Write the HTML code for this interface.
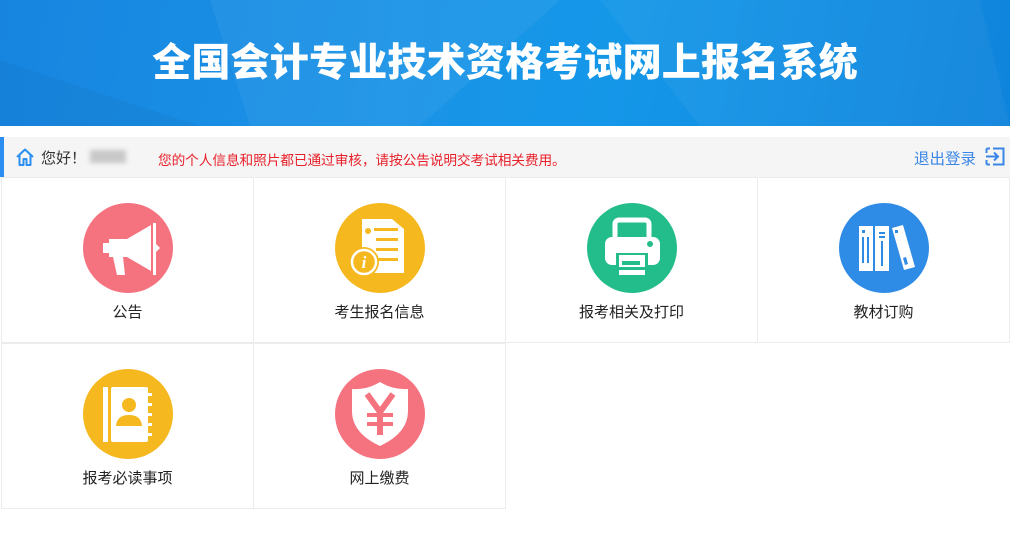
<!DOCTYPE html>
<html><head><meta charset="utf-8"><style>
*{margin:0;padding:0;box-sizing:border-box}
body{width:1010px;height:534px;background:#fff;font-family:"Liberation Sans","Noto Sans CJK SC",sans-serif;overflow:hidden;position:relative}
.hd{position:absolute;left:0;top:0;width:1010px;height:126px;background:linear-gradient(100deg,#1785e0 0%,#1a93e6 40%,#1597e8 60%,#0f84dc 100%);overflow:hidden}
.hd .t{position:absolute;left:0;right:0;top:36px;text-align:center;color:#fff;font-size:39px;font-weight:900;letter-spacing:0.2px;line-height:48px;font-family:"Noto Sans CJK SC",sans-serif}
.bar{position:absolute;left:0;top:137px;width:1010px;height:40px;background:#f5f5f5;border-left:4px solid #2a8ff0}
.bar .hi{position:absolute;left:37px;top:10px;font-size:15px;color:#333}
.bar .nm{position:absolute;left:86px;top:13px;width:36px;height:13px;background:#c8c8c8;filter:blur(2.5px)}
.bar .msg{position:absolute;left:154px;top:12px;font-size:13.7px;color:#e8202a;letter-spacing:-0.1px}
.bar .out{position:absolute;left:910px;top:10px;font-size:15.5px;color:#3a86e8}
.cell{position:absolute;width:253px;height:166px;border:1px solid #ececec;margin:-1px 0 0 -1px}
.c{position:absolute;left:81px;top:25px;width:90px;height:90px;border-radius:50%}
.lb{position:absolute;left:0;right:0;top:123px;text-align:center;font-size:15px;color:#222}
</style></head><body>
<div class="hd">
<svg width="1010" height="126" style="position:absolute;left:0;top:0">
<polygon points="210,0 560,0 420,126 250,126" fill="#fff" opacity="0.05"/>
<polygon points="600,0 980,0 1010,126 700,126" fill="#fff" opacity="0.04"/>
<polygon points="0,60 200,126 0,126" fill="#000" opacity="0.03"/>
</svg>
<div class="t">全国会计专业技术资格考试网上报名系统</div></div>
<div class="bar">
<svg style="position:absolute;left:11px;top:10px" width="20" height="20" viewBox="0 0 20 20"><path d="M2 10 L10 2.5 L18 10 M4.5 8 V18 H8.5 V12 H11.5 V18 H15.5 V8" fill="none" stroke="#2a8ff0" stroke-width="2" stroke-linejoin="round"/></svg>
<div class="hi">您好！</div><div class="nm"></div>
<div class="msg">您的个人信息和照片都已通过审核，请按公告说明交考试相关费用。</div>
<div class="out">退出登录</div>
<svg style="position:absolute;left:981px;top:10px" width="20" height="19" viewBox="0 0 20 19"><path d="M8 1.5 H18.5 V17.5 H8 M1 9.5 H13 M9 5.5 L13 9.5 L9 13.5" fill="none" stroke="#3a86e8" stroke-width="2"/><path d="M1.5 1.5 H5 M1.5 17.5 H5 M1.5 1.5 V6 M1.5 17.5 V13" stroke="#3a86e8" stroke-width="2" fill="none"/></svg>
</div>

<div class="cell" style="left:2px;top:178px"><div class="c" style="background:#f5737f">
<svg width="90" height="90" viewBox="0 0 90 90"><path d="M26 36 h18 l24 -14 v46 l-24 -14 h-18 z" fill="#fff"/><rect x="20" y="40" width="6" height="10" fill="#fff"/><rect x="70" y="20" width="3" height="52" fill="#fff"/><path d="M30 54 h10 l2 18 h-8 z" fill="#fff"/><path d="M73 41 l4 4 l-4 4z" fill="#fff"/></svg></div><div class="lb">公告</div></div>

<div class="cell" style="left:254px;top:178px"><div class="c" style="background:#f5b81e">
<svg width="90" height="90" viewBox="0 0 90 90"><path d="M27 16 h30 l12 10 v44 h-42 z" fill="#fff"/><circle cx="33" cy="28" r="3" fill="#f5b81e"/><rect x="39" y="25" width="24" height="3" fill="#f5b81e"/><rect x="41" y="35" width="22" height="3" fill="#f5b81e"/><rect x="41" y="45" width="22" height="3" fill="#f5b81e"/><rect x="41" y="55" width="22" height="3" fill="#f5b81e"/><circle cx="29" cy="59" r="15" fill="#f5b81e"/><circle cx="29" cy="59" r="12" fill="none" stroke="#fff" stroke-width="2.5"/><text x="29" y="65" text-anchor="middle" font-family="Liberation Serif" font-style="italic" font-weight="bold" font-size="17" fill="#fff">i</text></svg></div><div class="lb">考生报名信息</div></div>

<div class="cell" style="left:506px;top:178px"><div class="c" style="background:#23bd8c">
<svg width="90" height="90" viewBox="0 0 90 90"><rect x="28" y="17" width="34" height="22" rx="4" fill="none" stroke="#fff" stroke-width="5"/><rect x="18" y="34" width="55" height="28" rx="7" fill="#fff"/><circle cx="63" cy="41" r="3" fill="#23bd8c"/><rect x="29" y="50" width="32" height="24" fill="#23bd8c"/><rect x="32" y="52" width="26" height="20" fill="#fff"/><rect x="35" y="58" width="18" height="4" fill="#23bd8c"/><rect x="30" y="64" width="30" height="3" fill="#23bd8c"/></svg></div><div class="lb">报考相关及打印</div></div>

<div class="cell" style="left:758px;top:178px;width:253px"><div class="c" style="background:#2f8ce6">
<svg width="90" height="90" viewBox="0 0 90 90"><rect x="20" y="23" width="14" height="45" fill="#fff"/><rect x="36" y="23" width="14" height="45" fill="#fff"/><path d="M53 25 l11 -3 l12 42 l-11 3 z" fill="#fff"/><rect x="23" y="27" width="3" height="3" fill="#2f8ce6"/><rect x="23" y="34" width="2" height="26" fill="#2f8ce6"/><rect x="28" y="34" width="2" height="26" fill="#2f8ce6"/><rect x="40" y="29" width="6" height="2" fill="#2f8ce6"/><rect x="40" y="33" width="6" height="2" fill="#2f8ce6"/><rect x="42" y="38" width="2" height="25" fill="#2f8ce6"/><rect x="56" y="27" width="3" height="3" fill="#2f8ce6"/><path d="M64 55 l3 -1 l2 7 l-3 1z" fill="#2f8ce6"/></svg></div><div class="lb">教材订购</div></div>

<div class="cell" style="left:2px;top:344px"><div class="c" style="background:#f5b81e">
<svg width="90" height="90" viewBox="0 0 90 90"><rect x="20" y="18" width="5" height="55" fill="#fff"/><rect x="28" y="18" width="37" height="55" rx="2" fill="#fff"/><rect x="64" y="24" width="5" height="3" fill="#fff"/><rect x="64" y="34" width="5" height="3" fill="#fff"/><rect x="64" y="44" width="5" height="3" fill="#fff"/><rect x="64" y="54" width="5" height="3" fill="#fff"/><rect x="64" y="64" width="5" height="3" fill="#fff"/><circle cx="46" cy="36" r="7" fill="#f5b81e"/><path d="M33 57 q1 -11 13 -11 q12 0 13 11 z" fill="#f5b81e"/></svg></div><div class="lb">报考必读事项</div></div>

<div class="cell" style="left:254px;top:344px"><div class="c" style="background:#f5737f">
<svg width="90" height="90" viewBox="0 0 90 90"><path d="M45 13 q13 8 28 7 v22 q0 22 -28 35 q-28 -13 -28 -35 v-22 q15 1 28 -7z" fill="#fff"/><path d="M32 25 l13 18 l13 -18" fill="none" stroke="#f5737f" stroke-width="6"/><rect x="42" y="42" width="6" height="24" fill="#f5737f"/><rect x="32" y="44" width="26" height="4" fill="#f5737f"/><rect x="32" y="53" width="26" height="4" fill="#f5737f"/></svg></div><div class="lb">网上缴费</div></div>
</body></html>
